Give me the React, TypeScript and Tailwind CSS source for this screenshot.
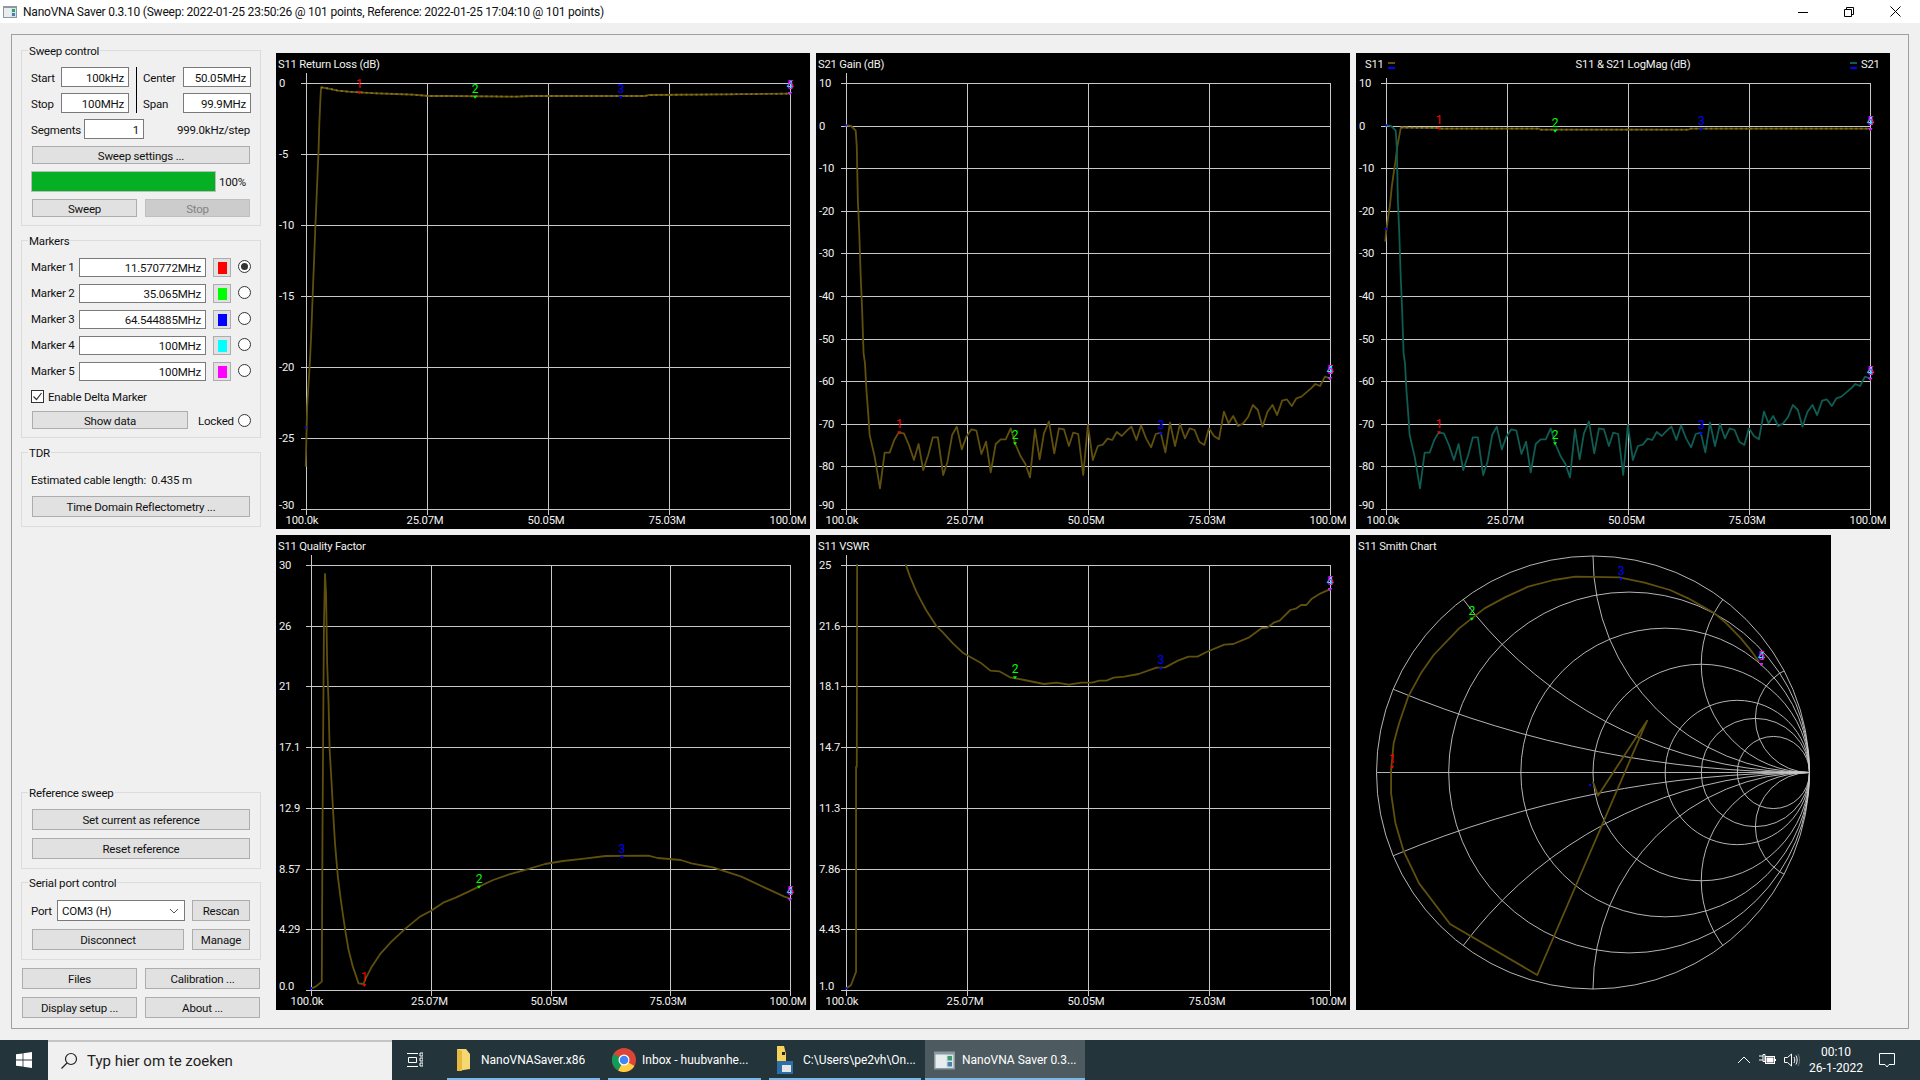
import React from 'react';

type P = [number, number];
const pts = (arr: P[], ox: number, oy: number, fx: number) => arr.map(([x, y]) => `${ox + x / fx},${oy + y / 3}`).join(' ');

const S11A: P[] = [[100,1280],[102,1190],[104,1100],[108,1030],[112,960],[115,890],[118,810],[121,725],[124,645],[127,560],[130,485],[133,405],[136,330],[138,255],[141,180],[143,142],[165,146],[190,152],[220,155],[250,157],[300,160],[350,162],[400,164],[445,168],[500,168],[690,170],[730,168],[1050,168],[1060,165],[1270,163],[1455,161]];
const S21: P[] = [[102,256],[115,258],[128,272],[131,320],[134,480],[138,580],[142,710],[146,810],[150,940],[154,970],[158,1050],[163,1120],[167,1185],[181,1250],[196,1345],[209,1238],[223,1238],[236,1200],[248,1178],[263,1180],[277,1215],[291,1260],[304,1212],[317,1290],[331,1245],[344,1192],[358,1192],[373,1305],[385,1265],[398,1185],[411,1160],[425,1228],[438,1190],[452,1168],[466,1172],[480,1242],[493,1205],[506,1297],[520,1212],[534,1198],[548,1198],[562,1165],[575,1212],[589,1247],[603,1272],[616,1312],[630,1168],[643,1258],[655,1180],[669,1145],[684,1240],[697,1165],[711,1168],[725,1218],[737,1178],[751,1182],[765,1305],[778,1155],[792,1260],[806,1218],[820,1214],[833,1196],[846,1200],[859,1176],[873,1188],[887,1172],[900,1160],[914,1200],[927,1156],[941,1195],[955,1222],[968,1182],[982,1178],[995,1237],[1008,1148],[1022,1218],[1036,1152],[1050,1195],[1063,1165],[1077,1170],[1090,1205],[1104,1215],[1117,1165],[1131,1188],[1145,1198],[1159,1115],[1172,1150],[1185,1128],[1199,1158],[1213,1150],[1227,1130],[1240,1095],[1254,1110],[1267,1160],[1281,1115],[1295,1095],[1308,1125],[1322,1082],[1335,1078],[1349,1098],[1362,1075],[1376,1070],[1389,1058],[1403,1045],[1415,1032],[1428,1038],[1442,1010],[1455,1015]];
const S11C: P[] = [[97,605],[100,570],[105,530],[110,495],[115,440],[120,400],[125,365],[130,320],[135,290],[140,262],[160,263],[245,264],[250,266],[520,266],[525,269],[930,269],[935,266],[1431,266]];
const Q: P[] = [[116,1375],[128,1370],[145,1355],[147,900],[149,590],[151,290],[154,132],[157,190],[160,400],[164,520],[167,660],[172,750],[177,850],[182,940],[190,1040],[197,1100],[205,1160],[212,1210],[220,1260],[232,1310],[248,1360],[262,1362],[268,1345],[285,1310],[310,1270],[340,1235],[380,1195],[420,1160],[450,1143],[485,1118],[520,1103],[550,1088],[585,1070],[625,1050],[670,1033],[720,1018],[770,1002],[820,993],[880,986],[940,978],[1060,977],[1085,984],[1150,990],[1180,1000],[1240,1012],[1320,1040],[1390,1075],[1440,1100],[1455,1105]];
const V1: P[] = [[102,1375],[115,1365],[129,1325],[129,710],[131,710],[132,103]];
const V2: P[] = [[268,103],[280,140],[300,190],[325,240],[355,290],[370,305],[400,340],[430,370],[480,400],[505,422],[530,424],[560,442],[600,450],[655,462],[690,458],[725,464],[760,458],[790,458],[810,452],[830,452],[850,443],[880,440],[920,432],[970,413],[995,412],[1030,392],[1060,380],[1085,380],[1110,366],[1160,344],[1185,342],[1230,322],[1265,294],[1280,293],[1300,277],[1315,272],[1345,240],[1360,236],[1375,225],[1390,225],[1405,206],[1430,190],[1455,178]];
const SM: P[] = [[668,755],[682,797],[817,572],[515,1335],[275,1182],[190,1060],[148,965],[125,880],[113,790],[113,720],[120,640],[135,580],[160,500],[195,430],[230,375],[300,295],[370,235],[430,200],[490,170],[560,150],[620,140],[740,142],[810,158],[880,180],[930,205],[1000,248],[1035,280],[1075,325],[1105,365],[1125,395]];

const OLIVE = '#5f500e';
const TEAL = '#0f5c52';
const GRID = '#c8c8c8';
const MC = ['#ff0000', '#00ff00', '#0000ff', '#00ffff', '#ff00ff'];

function Marker({ n, x, y }: { n: number; x: number; y: number }) {
  return (
    <g>
      <polygon points={`${x - 2},${y - 1} ${x + 2},${y - 1} ${x},${y + 2}`} fill={MC[n - 1]} />
      <text x={x} y={y - 8} fontSize="12" fill={MC[n - 1]} textAnchor="middle" dominantBaseline="central">{n}</text>
    </g>
  );
}

type M = [number, number, number];
function Markers({ list, ox, oy, fx, dot }: { list: M[]; ox: number; oy: number; fx: number; dot?: P }) {
  return (
    <g>
      {list.map(([n, x, y], i) => <Marker key={i} n={n} x={ox + x / fx} y={oy + y / 3} />)}
      {dot && <rect x={ox + dot[0] / fx - 1} y={oy + dot[1] / 3 - 1} width="2" height="2" fill="#0000ff" />}
    </g>
  );
}

function T({ x, y, children, anchor = 'start', fill = '#f0f0f0' }: { x: number; y: number; children: React.ReactNode; anchor?: 'start' | 'middle' | 'end'; fill?: string }) {
  return <text x={x} y={y} fontSize="11.25" letterSpacing="-0.2" fill={fill} textAnchor={anchor} dominantBaseline="central">{children}</text>;
}

function Chart({ left, top, w, h, children }: { left: number; top: number; w: number; h: number; children: React.ReactNode }) {
  return (
    <svg width={w} height={h} viewBox={`${left} ${top} ${w} ${h}`} className="block bg-black">
      {children}
    </svg>
  );
}

function Axes({ x0, xs, ys, y0, labels, xl0, xlN, labelX, axisTop }: { x0: number; xs: number[]; ys: number[]; y0: number; labels: string[]; xl0: number; xlN: number; labelX: number; axisTop: number }) {
  const xr = xs[xs.length - 1];
  const yb = ys[ys.length - 1];
  const xt = ['25.07M', '50.05M', '75.03M'];
  return (
    <g>
      <g stroke={GRID} strokeWidth="1" shapeRendering="crispEdges">
        <line x1={x0} x2={x0} y1={axisTop} y2={yb + 6} />
        {xs.map((x, i) => <line key={i} x1={x} x2={x} y1={ys[0]} y2={yb + 6} />)}
        {ys.map((y, i) => <line key={i} x1={x0 - 5} x2={xr} y1={y} y2={y} />)}
      </g>
      {labels.map((l, i) => <T key={i} x={labelX} y={ys[i] - (i === labels.length - 1 ? 4 : 0)}>{l}</T>)}
      <T x={xl0} y={y0} anchor="middle">100.0k</T>
      {xt.map((l, i) => <T key={i} x={xs[i] - 2} y={y0} anchor="middle">{l}</T>)}
      <T x={xlN} y={y0} anchor="middle">100.0M</T>
    </g>
  );
}

const Y1 = [130, 259, 385, 514, 640, 769, 898, 1024, 1153, 1279, 1408].map((v) => 40 + v / 3);
const Y1b = [130, 343, 556, 769, 982, 1195, 1408].map((v) => 40 + v / 3);
const Y2 = [106, 289, 469, 652, 835, 1018, 1198, 1381].map((v) => 530 + v / 3);
const GL = ['10', '0', '-10', '-20', '-30', '-40', '-50', '-60', '-70', '-80', '-90'];

function Line({ p, c = OLIVE, w = 1.8, dots }: { p: string; c?: string; w?: number; dots?: string }) {
  return (
    <g>
      <polyline points={p} fill="none" stroke={c} strokeWidth={w} strokeLinejoin="round" />
      {dots && <polyline points={dots} fill="none" stroke="#8a7414" strokeWidth={w} strokeDasharray="2 3" />}
    </g>
  );
}

function Smith() {
  const cx = 1593, cy = 772.5, R = 216.5, right = cx + R;
  const res = [5 / 6, 2 / 3, 1 / 2, 1 / 3, 1 / 4, 1 / 6];
  const im = [0.2, 0.5, 1, 2, 4];
  return (
    <g fill="none" stroke="#c8c8c8" strokeWidth="0.9">
      <defs>
        <clipPath id="smith-clip"><circle cx={cx} cy={cy} r={R} /></clipPath>
      </defs>
      <circle cx={cx} cy={cy} r={R} />
      <line x1={cx - R} x2={right} y1={cy} y2={cy} shapeRendering="crispEdges" />
      {res.map((k, i) => <circle key={i} cx={right - R * k} cy={cy} r={R * k} />)}
      <g clipPath="url(#smith-clip)">
        {im.map((x, i) => (
          <g key={i}>
            <circle cx={right} cy={cy - R / x} r={R / x} />
            <circle cx={right} cy={cy + R / x} r={R / x} />
          </g>
        ))}
      </g>
    </g>
  );
}

function Charts() {
  const xs1 = [427, 548, 669, 790];
  const xs2 = [967, 1088, 1209, 1330];
  const xs3 = [1507.5, 1628.5, 1749, 1870];
  const xs4 = [431.5, 551, 670, 790];
  const y11 = ['0', '-5', '-10', '-15', '-20', '-25', '-30'];
  const s21Teal = S21.map(([x, y]) => `${810 + x / 2.8 + 540},${40 + y / 3}`).join(' ');
  return (
    <div className="ml-[15px] mt-[18px] grid grid-cols-[534px_534px_534px] grid-rows-[476px_475px] gap-[6px]">
      <Chart left={276} top={53} w={534} h={476}>
        <T x={278} y={64}>S11 Return Loss (dB)</T>
        <Axes x0={306.4} xs={xs1} ys={Y1b} y0={520} labels={y11} xl0={302} xlN={788} labelX={279} axisTop={73} />
        <Line p={pts(S11A, 270, 40, 2.8)} dots={pts(S11A.slice(15), 270, 40, 2.8)} />
        <Markers ox={270} oy={40} fx={2.8} dot={[100, 1162]} list={[[1, 250, 157], [2, 574, 170], [3, 982, 170], [4, 1456, 160], [5, 1456, 160]]} />
      </Chart>
      <Chart left={816} top={53} w={534} h={476}>
        <T x={818} y={64}>S21 Gain (dB)</T>
        <Axes x0={846.4} xs={xs2} ys={Y1} y0={520} labels={GL} xl0={842} xlN={1328} labelX={819} axisTop={73} />
        <Line p={pts(S21, 810, 40, 2.8)} />
        <Markers ox={810} oy={40} fx={2.8} dot={[100, 256]} list={[[1, 250, 1177], [2, 574, 1210], [3, 982, 1180], [4, 1456, 1015], [5, 1456, 1015]]} />
      </Chart>
      <Chart left={1356} top={53} w={534} h={476}>
        <T x={1365} y={64}>S11</T>
        <rect x={1388} y={62} width={7} height={2} fill={OLIVE} />
        <rect x={1388} y={67} width={7} height={2} fill="#0000ff" />
        <T x={1633} y={64} anchor="middle">S11 &amp; S21 LogMag (dB)</T>
        <rect x={1850} y={62} width={7} height={2} fill={TEAL} />
        <rect x={1850} y={67} width={7} height={2} fill="#0000ff" />
        <T x={1861} y={64}>S21</T>
        <Axes x0={1386.4} xs={xs3} ys={Y1} y0={520} labels={GL} xl0={1383} xlN={1868} labelX={1359} axisTop={78} />
        <Line p={pts(S11C, 1350, 40, 2.75)} dots={pts(S11C.slice(9), 1350, 40, 2.75)} />
        <Line p={s21Teal} c={TEAL} />
        <Markers ox={1350} oy={40} fx={2.75} dot={[99, 567]} list={[[1, 245, 265], [2, 564, 272], [3, 966, 268], [4, 1431, 268], [5, 1431, 268]]} />
        <Markers ox={1350} oy={40} fx={2.75} dot={[99, 256]} list={[[1, 245, 1177], [2, 564, 1210], [3, 966, 1180], [4, 1431, 1016], [5, 1431, 1016]]} />
      </Chart>
      <Chart left={276} top={535} w={534} h={475}>
        <T x={278} y={546}>S11 Quality Factor</T>
        <Axes x0={311.4} xs={xs4} ys={Y2} y0={1001} labels={['30', '26', '21', '17.1', '12.9', '8.57', '4.29', '0.0']} xl0={307} xlN={788} labelX={279} axisTop={555} />
        <Line p={pts(Q, 270, 530, 2.8)} />
        <Markers ox={270} oy={530} fx={2.8} dot={[115, 1375]} list={[[1, 264, 1365], [2, 585, 1070], [3, 985, 980], [4, 1456, 1108], [5, 1456, 1108]]} />
      </Chart>
      <Chart left={816} top={535} w={534} h={475}>
        <T x={818} y={546}>S11 VSWR</T>
        <Axes x0={846.4} xs={xs2} ys={Y2} y0={1001} labels={['25', '21.6', '18.1', '14.7', '11.3', '7.86', '4.43', '1.0']} xl0={842} xlN={1328} labelX={819} axisTop={555} />
        <Line p={pts(V1, 810, 530, 2.8)} />
        <Line p={pts(V2, 810, 530, 2.8)} />
        <Markers ox={810} oy={530} fx={2.8} dot={[101, 1375]} list={[[2, 574, 442], [3, 982, 415], [4, 1456, 178], [5, 1456, 178]]} />
      </Chart>
      <Chart left={1356} top={535} w={475} h={475}>
        <T x={1358} y={546}>S11 Smith Chart</T>
        <Smith />
        <Line p={pts(SM, 1350, 530, 2.75)} />
        <Markers ox={1350} oy={530} fx={2.75} dot={[660, 765]} list={[[1, 116, 710], [2, 335, 266], [3, 745, 146], [4, 1131, 403], [5, 1131, 403]]} />
      </Chart>
    </div>
  );
}

function Group({ title, h, children }: { title: string; h: string; children: React.ReactNode }) {
  return (
    <div className={`relative border border-[#dcdcdc] pl-[9px] pr-[9px] ${h}`}>
      <span className="absolute left-[6px] top-[-7px] bg-[#f0f0f0] px-[1px] leading-[14px]">{title}</span>
      {children}
    </div>
  );
}

function Btn({ children, w, h = 'h-[21px]', extra = '' }: { children: React.ReactNode; w: string; h?: string; extra?: string }) {
  return <div className={`flex items-center justify-center shrink-0 pt-px bg-[#e1e1e1] border border-[#adadad] ${w} ${h} ${extra}`}>{children}</div>;
}

function Field({ v, w, h = 'h-[20px]' }: { v: string; w: string; h?: string }) {
  return <div className={`flex items-center justify-end shrink-0 pt-px bg-white border border-[#7a7a7a] pr-[4px] ${w} ${h}`}>{v}</div>;
}

function Radio({ on }: { on?: boolean }) {
  return (
    <div className="flex items-center justify-center shrink-0 w-[13px] h-[13px] rounded-full bg-white border border-[#333333]">
      {on && <div className="w-[7px] h-[7px] rounded-full bg-[#333333]" />}
    </div>
  );
}

function MarkerRow({ n, v, c, on }: { n: number; v: string; c: string; on?: boolean }) {
  return (
    <div className="flex items-start h-[20px]">
      <span className="w-[48px] shrink-0 leading-[19px]">Marker {n}</span>
      <Field v={v} w="w-[127px]" h="h-[19px]" />
      <div className="ml-[7px] w-[18px] h-[19px] shrink-0 flex items-center justify-center bg-[#e1e1e1] border border-[#adadad]">
        <div className="w-[9px] h-[12px]" style={{ backgroundColor: c }} />
      </div>
      <div className="ml-[7px] mt-[2px]"><Radio on={on} /></div>
    </div>
  );
}

function Sidebar() {
  return (
    <div className="flex flex-col w-[240px] h-full pt-[15px] pb-[10px] shrink-0">
      <Group title="Sweep control" h="h-[176px]">
        <div className="pt-[16px] flex">
          <div className="flex flex-col gap-[6px]">
            <div className="flex items-center"><span className="w-[30px] pt-px">Start</span><Field v="100kHz" w="w-[68px]" /></div>
            <div className="flex items-center"><span className="w-[30px] pt-px">Stop</span><Field v="100MHz" w="w-[68px]" /></div>
          </div>
          <div className="ml-[7px] w-px h-[46px] bg-black" />
          <div className="ml-[6px] flex flex-col gap-[6px]">
            <div className="flex items-center"><span className="w-[40px] pt-px">Center</span><Field v="50.05MHz" w="w-[68px]" /></div>
            <div className="flex items-center"><span className="w-[40px] pt-px">Span</span><Field v="99.9MHz" w="w-[68px]" /></div>
          </div>
        </div>
        <div className="mt-[6px] flex items-center">
          <span className="w-[53px] pt-px">Segments</span>
          <Field v="1" w="w-[60px]" />
          <span className="ml-auto mr-[1px] pt-px">999.0kHz/step</span>
        </div>
        <Btn w="w-[218px]" h="h-[18px]" extra="mt-[7px] ml-[1px]">Sweep settings ...</Btn>
        <div className="mt-[7px] flex items-center">
          <div className="w-[185px] h-[21px] bg-[#06b025] border border-[#bcbcbc]" />
          <span className="ml-[3px] pt-px">100%</span>
        </div>
        <div className="mt-[7px] ml-[1px] flex gap-[8px]">
          <Btn w="w-[105px]" h="h-[18px]">Sweep</Btn>
          <div className="flex items-center justify-center pt-px w-[105px] h-[18px] bg-[#cccccc] border border-[#bfbfbf] text-[#838383]">Stop</div>
        </div>
      </Group>
      <div className="mt-[14px]">
        <Group title="Markers" h="h-[198px]">
          <div className="pt-[17px] flex flex-col gap-[6px]">
            <MarkerRow n={1} v="11.570772MHz" c="#ff0000" on />
            <MarkerRow n={2} v="35.065MHz" c="#00ff00" />
            <MarkerRow n={3} v="64.544885MHz" c="#0000ff" />
            <MarkerRow n={4} v="100MHz" c="#00ffff" />
            <MarkerRow n={5} v="100MHz" c="#ff00ff" />
          </div>
          <div className="mt-[5px] flex items-center h-[19px]">
            <div className="flex items-center justify-center w-[13px] h-[13px] border border-[#333333] bg-white">
              <svg width="11" height="11" viewBox="0 0 11 11"><path d="M1.5 5.5 L4.5 8.5 L9.5 2" fill="none" stroke="#333" strokeWidth="1.2" /></svg>
            </div>
            <span className="ml-[4px]">Enable Delta Marker</span>
          </div>
          <div className="mt-[5px] flex items-center">
            <Btn w="w-[156px]" h="h-[18px]" extra="ml-[1px]">Show data</Btn>
            <span className="ml-[10px] w-[40px] shrink-0 pt-px">Locked</span>
            <Radio />
          </div>
        </Group>
      </div>
      <div className="mt-[14px]">
        <Group title="TDR" h="h-[75px]">
          <div className="pt-[11px] h-[43px] flex items-center whitespace-pre">Estimated cable length:  0.435 m</div>
          <Btn w="w-[218px]" h="h-[21px]" extra="ml-[1px]">Time Domain Reflectometry ...</Btn>
        </Group>
      </div>
      <div className="flex-1" />
      <Group title="Reference sweep" h="h-[77px]">
        <div className="pt-[16px] flex flex-col gap-[8px] pl-[1px]">
          <Btn w="w-[218px]">Set current as reference</Btn>
          <Btn w="w-[218px]">Reset reference</Btn>
        </div>
      </Group>
      <div className="mt-[13px]">
        <Group title="Serial port control" h="h-[78px]">
          <div className="pt-[17px] flex items-center">
            <span className="w-[26px] pt-px">Port</span>
            <div className="flex items-center justify-between w-[128px] h-[21px] bg-white border border-[#7a7a7a] pl-[4px] pr-[5px]">
              <span className="pt-px">COM3 (H)</span>
              <svg width="10" height="6" viewBox="0 0 10 6"><path d="M1 1 L5 5 L9 1" fill="none" stroke="#555" /></svg>
            </div>
            <Btn w="w-[58px]" extra="ml-[7px]">Rescan</Btn>
          </div>
          <div className="mt-[8px] flex items-center pl-[1px]">
            <Btn w="w-[152px]">Disconnect</Btn>
            <Btn w="w-[58px]" extra="ml-[8px]">Manage</Btn>
          </div>
        </Group>
      </div>
      <div className="mt-[8px] flex gap-[8px] pl-[1px]">
        <Btn w="w-[115px]">Files</Btn>
        <Btn w="w-[115px]">Calibration ...</Btn>
      </div>
      <div className="mt-[8px] flex gap-[8px] pl-[1px]">
        <Btn w="w-[115px]">Display setup ...</Btn>
        <Btn w="w-[115px]">About ...</Btn>
      </div>
    </div>
  );
}

function AppIcon({ size = 14 }: { size?: number }) {
  return (
    <svg width={size} height={size} viewBox="0 0 14 14">
      <rect x="0" y="1" width="14" height="12" fill="#8a9aa0" />
      <rect x="1" y="3" width="7" height="9" fill="#e8eef0" />
      <rect x="8" y="3" width="5" height="9" fill="#d8e4e0" />
      <rect x="9" y="4" width="3" height="3" fill="#3a9a70" />
      <rect x="9" y="8" width="3" height="3" fill="#4a80b0" />
    </svg>
  );
}

function TitleBar() {
  return (
    <div className="flex items-center h-[23px] bg-white shrink-0">
      <div className="ml-[3px]"><AppIcon /></div>
      <span className="ml-[6px] text-[12px] tracking-[-0.23px]">NanoVNA Saver 0.3.10 (Sweep: 2022-01-25 23:50:26 @ 101 points, Reference: 2022-01-25 17:04:10 @ 101 points)</span>
      <div className="ml-auto flex items-center">
        <div className="w-[46px] flex justify-center"><svg width="10" height="10" viewBox="0 0 10 10"><line x1="0" x2="10" y1="5.5" y2="5.5" stroke="#000" /></svg></div>
        <div className="w-[46px] flex justify-center"><svg width="10" height="10" viewBox="0 0 10 10"><path d="M0.5 2.5 h7 v7 h-7 z M2.5 2.5 v-2 h7 v7 h-2" fill="none" stroke="#000" /></svg></div>
        <div className="w-[46px] mr-[2px] flex justify-center"><svg width="11" height="11" viewBox="0 0 11 11"><path d="M0.5 0.5 L10.5 10.5 M10.5 0.5 L0.5 10.5" stroke="#000" /></svg></div>
      </div>
    </div>
  );
}

function TaskItem({ icon, label, w, active, ml }: { icon: React.ReactNode; label: string; w: string; active?: boolean; ml: string }) {
  return (
    <div className={`relative flex items-center h-full shrink-0 ${w} ${ml} ${active ? 'bg-[#4d5a60] pl-[7px]' : 'pl-[4px]'}`}>
      <div className="w-[24px] flex justify-center shrink-0">{icon}</div>
      <span className="ml-[6px] text-[12px] tracking-normal text-white truncate">{label}</span>
      <div className="absolute left-0 right-0 bottom-0 h-[2px] bg-[#76b9ed]" />
    </div>
  );
}

function Taskbar() {
  return (
    <div className="flex items-center h-[40px] bg-[#24343b] shrink-0 text-white tracking-normal">
      <div className="w-[48px] flex justify-center">
        <svg width="16" height="16" viewBox="0 0 16 16" fill="#fff"><path d="M0 2.3 L6.6 1.4 V7.6 H0 Z M7.4 1.3 L16 0 V7.6 H7.4 Z M0 8.4 H6.6 V14.6 L0 13.7 Z M7.4 8.4 H16 V16 L7.4 14.7 Z" /></svg>
      </div>
      <div className="flex items-center w-[344px] h-full bg-[#f0f0f0] border-t-2 border-[#c4c4c4] text-[#222]">
        <svg className="ml-[12px]" width="18" height="18" viewBox="0 0 18 18" fill="none" stroke="#222" strokeWidth="1.2"><circle cx="11" cy="7" r="5.5" /><path d="M7 11 L1.5 16.5" /></svg>
        <span className="ml-[9px] text-[15px]">Typ hier om te zoeken</span>
      </div>
      <div className="ml-[15px] w-[16px]">
        <svg width="16" height="16" viewBox="0 0 16 16" fill="none" stroke="#fff"><path d="M0 1.5 H11 M0 14.5 H11 M1.5 5.5 H9.5 V10.5 H1.5 Z M13 1 H16 V4 H13 Z M13 6 H16 V9 H13 Z M13 11 H16 V14 H13 Z" /></svg>
      </div>
      <TaskItem ml="ml-[24px]" w="w-[153px]" label="NanoVNASaver.x86" icon={
        <svg width="15" height="24" viewBox="0 0 15 24"><path d="M1 1 L10 1 L14 6 V21 L1 23 Z" fill="#f6d873" /><path d="M1 1 L6 3 V23 L1 23 Z" fill="#e8b93f" /></svg>
      } />
      <TaskItem ml="ml-[8px]" w="w-[153px]" label="Inbox - huubvanhe..." icon={
        <svg width="24" height="24" viewBox="0 0 24 24">
          <circle cx="12" cy="12" r="12" fill="#db4437" />
          <path d="M12 12 L22.4 18 A12 12 0 0 1 6 22.4 Z" fill="#ffcd40" />
          <path d="M12 12 L6 22.4 A12 12 0 0 1 1.6 6 Z" fill="#0f9d58" />
          <circle cx="12" cy="12" r="5.5" fill="#fff" />
          <circle cx="12" cy="12" r="4.3" fill="#4285f4" />
        </svg>
      } />
      <TaskItem ml="ml-[8px]" w="w-[152px]" label="C:\Users\pe2vh\On..." icon={
        <svg width="20" height="30" viewBox="0 0 20 30">
          <path d="M2 1 H9 L11 9 V18 H2 Z" fill="#f6d35b" />
          <rect x="2" y="16" width="16" height="13" fill="#2c6ea6" />
          <rect x="7" y="20" width="9" height="7" fill="#e6e6e6" />
          <rect x="7" y="7" width="3" height="3" fill="#222" />
        </svg>
      } />
      <TaskItem active ml="ml-[4px]" w="w-[160px]" label="NanoVNA Saver 0.3..." icon={<AppIcon size={21} />} />
      <div className="ml-auto flex items-center h-full">
        <svg width="14" height="8" viewBox="0 0 14 8" fill="none" stroke="#fff"><path d="M1 7 L7 1 L13 7" /></svg>
        <svg className="ml-[8px]" width="17" height="12" viewBox="0 0 17 12" fill="none" stroke="#fff"><path d="M0 2 H4 M0 6 H4 M4 0.5 H6 V7.5 H4 Z" /><rect x="6.5" y="2.5" width="9" height="7" /><rect x="8" y="4" width="6" height="4" fill="#fff" /><path d="M16.5 5 V7" /></svg>
        <svg className="ml-[8px]" width="16" height="14" viewBox="0 0 16 14" fill="none" stroke="#fff"><path d="M0.5 4.5 H3.5 L7.5 1 V13 L3.5 9.5 H0.5 Z" /><path d="M10 4 C11 6 11 8 10 10 M12 2.5 C13.5 5.5 13.5 8.5 12 11.5" /><path d="M14 1 C16 5 16 9 14 13" stroke="#777" /></svg>
        <div className="ml-[6px] w-[60px] flex flex-col items-center text-[12px] leading-[16px]">
          <span>00:10</span>
          <span>26-1-2022</span>
        </div>
        <div className="ml-[13px] mr-[25px]">
          <svg width="16" height="16" viewBox="0 0 16 16" fill="none" stroke="#fff"><path d="M0.5 1.5 H15.5 V12.5 H10 L8 15 L6 12.5 H0.5 Z" /></svg>
        </div>
      </div>
    </div>
  );
}

export default function App() {
  return (
    <div className="flex flex-col w-[1920px] h-[1080px] overflow-hidden bg-[#f0f0f0] text-[11.5px] tracking-[-0.2px] leading-[14px] text-[#111] font-['Roboto',sans-serif]">
      <TitleBar />
      <div className="flex-1 min-h-0 mx-[11px] mt-[11px] mb-[11px] border border-[#a0a0a0] flex pl-[9px]">
        <Sidebar />
        <Charts />
      </div>
      <Taskbar />
    </div>
  );
}
